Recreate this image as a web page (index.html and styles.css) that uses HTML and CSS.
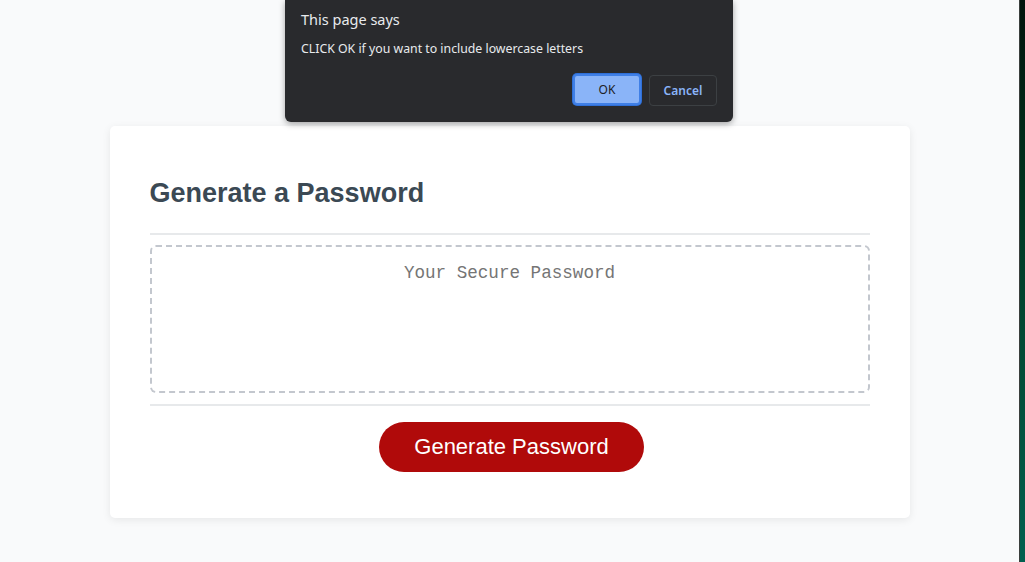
FILE: index.html
```html
<!DOCTYPE html>
<html lang="en">
<head>
<meta charset="utf-8">
<title>Password Generator</title>
<link rel="stylesheet" href="styles.css">
</head>
<body>
  <div class="screen">
    <div class="page">
      <div class="wrapper">
        <div class="card">
          <div class="card-header">
            <h2>Generate a Password</h2>
          </div>
          <div class="card-body">
            <textarea readonly id="password" class="password" placeholder="Your Secure Password" aria-label="Generated Password"></textarea>
          </div>
          <div class="card-footer">
            <button class="btn">Generate Password</button>
          </div>
        </div>
      </div>
      <div class="dialog">
        <div class="dialog-title">This page says</div>
        <div class="dialog-msg">CLICK OK if you want to include lowercase letters</div>
        <div class="dialog-actions">
          <button class="dlg-btn dlg-ok">OK</button>
          <button class="dlg-btn dlg-cancel">Cancel</button>
        </div>
      </div>
    </div>
    <div class="edge"></div>
  </div>
</body>
</html>
```
FILE: styles.css
```css
* { box-sizing: border-box; }
html, body { margin: 0; padding: 0; height: 100%; }
body {
  font-family: "Liberation Sans", Arial, sans-serif;
  overflow: hidden;
}
.screen {
  display: flex;
  height: 562px;
}
.page {
  flex: 1;
  position: relative;
  background: #f9fafb;
}
.edge {
  width: 6px;
  border-left: 1px solid #3a3f3c;
  background: linear-gradient(to bottom, #00140c 0%, #00301c 30%, #004a34 60%, #00604f 100%);
}
.wrapper {
  padding: 126px 20px 0;
}
.card {
  background: #fff;
  border-radius: 5px;
  box-shadow: 0 2px 8px rgba(0, 0, 0, 0.08);
  color: #3b4954;
  font-size: 18px;
  margin: 0 auto;
  max-width: 800px;
  padding: 30px 40px;
}
.card-header h2 {
  margin: 22px 0 24px;
  font-size: 27px;
  line-height: 31px;
  font-weight: bold;
}
.card-header::after,
.card-footer::before {
  content: "";
  display: block;
  height: 2px;
  background: #e7e9eb;
}
.card-header::after { margin-top: 1px; }
.password {
  display: block;
  width: 100%;
  margin: 10px 0 11px;
  padding: 15px 15px 85px;
  border: 2px dashed #c3c7ce;
  border-radius: 6px;
  background: transparent;
  font-family: "Liberation Mono", "DejaVu Sans Mono", monospace;
  font-size: 17.6px;
  line-height: 22px;
  height: 148px;
  text-align: center;
  resize: none;
  overflow: hidden;
  color: #333;
}
.password::placeholder { color: #757575; }
.card-footer { text-align: center; }
.btn {
  border: none;
  background: #b00a0a;
  border-radius: 25px;
  color: #fff;
  display: inline-block;
  font-family: "Liberation Sans", Arial, sans-serif;
  font-size: 22px;
  line-height: 22px;
  margin: 16px 16px 16px 20px;
  padding: 14px 35px;
  cursor: pointer;
}
.dialog {
  position: absolute;
  top: 0;
  left: 285px;
  width: 448px;
  height: 122px;
  background: #292a2d;
  border-radius: 0 0 6px 6px;
  box-shadow: 0 2px 6px rgba(0, 0, 0, 0.35);
  font-family: "Noto Sans", "Open Sans", sans-serif;
  color: #e8eaed;
  padding: 9px 16px 0 16px;
}
.dialog-title {
  font-size: 14.5px;
  line-height: 20px;
}
.dialog-msg {
  font-size: 12.3px;
  line-height: 18px;
  margin-top: 11px;
}
.dialog-actions {
  display: flex;
  justify-content: flex-end;
  gap: 8px;
  margin-top: 17px;
}
.dlg-btn {
  width: 68px;
  height: 31px;
  border-radius: 4px;
  font-family: "Noto Sans", "Open Sans", sans-serif;
  font-size: 12px;
  padding: 0;
  cursor: pointer;
}
.dlg-ok {
  background: #8ab4f8;
  color: #202124;
  border: 2px solid #3f7fe6;
  box-shadow: 0 0 0 1px #2f6fd6;
  height: 31px;
  margin-top: -1px;
}
.dlg-cancel {
  background: transparent;
  color: #8ab4f8;
  border: 1px solid #3c4043;
  font-weight: 600;
}
```
